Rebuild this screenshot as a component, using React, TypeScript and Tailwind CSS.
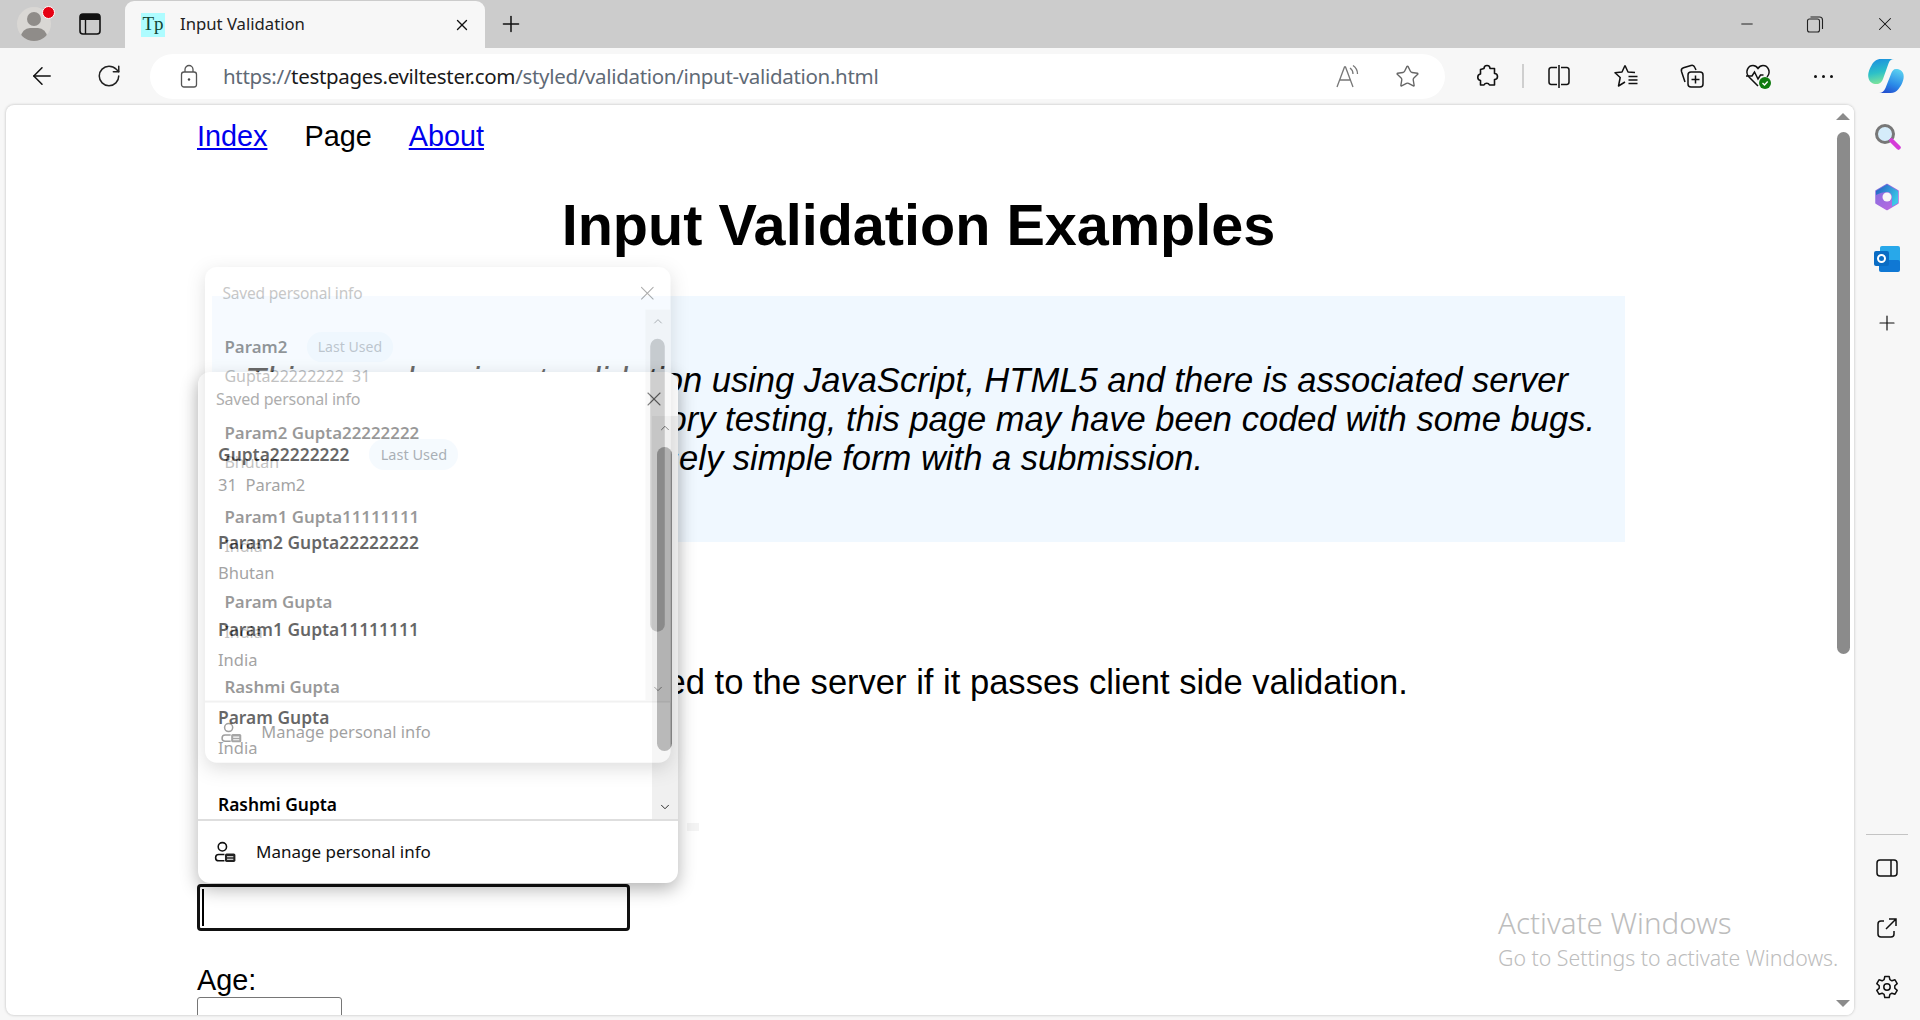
import React from "react";
import { Minus, X, Plus, ArrowLeft, RotateCw, Star, ChevronUp, ChevronDown } from "lucide-react";

const ui = "font-['Noto_Sans',sans-serif]";

type Row = { name: string; sub: string; badge?: boolean };

const frontRows: Row[] = [
  { name: "Gupta22222222", sub: "31  Param2", badge: true },
  { name: "Param2 Gupta22222222", sub: "Bhutan" },
  { name: "Param1 Gupta11111111", sub: "India" },
  { name: "Param Gupta", sub: "India" },
  { name: "Rashmi Gupta", sub: "" },
];

const backRows: Row[] = [
  { name: "Param2", sub: "Gupta22222222  31", badge: true },
  { name: "Param2 Gupta22222222", sub: "Bhutan" },
  { name: "Param1 Gupta11111111", sub: "India" },
  { name: "Param Gupta", sub: "India" },
  { name: "Rashmi Gupta", sub: "" },
];

const ManageIcon = () => (
  <svg width="25" height="25" viewBox="0 0 24 24" fill="none" stroke="#111" strokeWidth="1.5">
    <circle cx="9" cy="6.5" r="4" />
    <path d="M11 14H5.5a3 3 0 0 0 0 6H11" />
    <rect x="11.5" y="13" width="10" height="8" rx="1.5" fill="#222" stroke="none" />
    <path d="M13.5 16h6M13.5 18.5h6" stroke="#fff" strokeWidth="1" />
  </svg>
);

function AddressPopup({ rows, thumb, className }: { rows: Row[]; thumb: string; className: string }) {
  return (
    <div className={`absolute w-[480px] h-[511px] bg-white rounded-[12px] overflow-hidden flex flex-col shadow-[0_6px_18px_rgba(0,0,0,0.3)] origin-top-left ${ui} ${className}`}>
      <div className="h-[44px] flex items-center justify-between pl-[18px] pr-[12px] pt-[10px] shrink-0">
        <span className="text-[16px] text-[#777] tracking-[-0.2px]">Saved personal info</span>
        <X size={24} strokeWidth={1.1} className="text-[#333]" />
      </div>
      <div className="flex-1 flex min-h-0">
        <div className="flex-1 pl-[20px] pt-[23px] overflow-hidden">
          {rows.map((r) => (
            <div key={r.name} className="h-[87.5px]">
              <div className="h-[31px] flex items-center gap-[20px]">
                <span className="text-[17.4px] font-semibold text-black whitespace-nowrap">{r.name}</span>
                {r.badge && (
                  <span className="w-[89px] h-[31px] rounded-full bg-[#eff7fe] text-[#6f7a85] text-[14.5px] flex items-center justify-center">Last Used</span>
                )}
              </div>
              <div className="text-[16.5px] leading-[24px] mt-[3px] text-[#666] whitespace-pre">{r.sub}</div>
            </div>
          ))}
        </div>
        <div className="w-[26px] bg-[#f0f0f0] relative flex flex-col items-center justify-between py-[5px] shrink-0">
          <ChevronUp size={14} strokeWidth={1.5} className="text-[#222]" />
          <div className={`absolute left-[5px] w-[15px] rounded-full ${thumb}`} />
          <ChevronDown size={14} strokeWidth={1.5} className="text-[#111]" />
        </div>
      </div>
      <div className="h-[64px] border-t-2 border-[#dedede] flex items-center pl-[15px] gap-[18px] shrink-0">
        <ManageIcon />
        <span className="text-[17px] text-[#111]">Manage personal info</span>
      </div>
    </div>
  );
}

const ToolIcon = ({ children, x }: { children: React.ReactNode; x?: string }) => (
  <div className={`w-[28px] h-[28px] flex items-center justify-center shrink-0 ${x ?? ""}`}>{children}</div>
);

function TabStrip() {
  return (
    <div className="h-[48px] bg-[#cccccc] flex items-end shrink-0 relative">
      <div className="w-[17px]" />
      <div className="relative w-[34px] h-[34px] mb-[7px] rounded-full bg-[#d9d7d4] overflow-hidden shrink-0">
        <div className="absolute left-[10px] top-[5px] w-[14px] h-[14px] rounded-full bg-[#8f8c89]" />
        <div className="absolute left-[4px] top-[21px] w-[26px] h-[18px] rounded-full bg-[#8f8c89]" />
      </div>
      <div className="absolute left-[42px] top-[6px] w-[11px] h-[11px] rounded-full bg-[#e60012] border border-white box-content" />
      <div className="w-[28px]" />
      <svg width="22" height="22" viewBox="0 0 22 22" className="mb-[13px] shrink-0">
        <rect x="1" y="1" width="20" height="20" rx="3" fill="none" stroke="#111" strokeWidth="1.6" />
        <path d="M1 4a3 3 0 0 1 3-3h14a3 3 0 0 1 3 3v3H1z" fill="#111" />
        <path d="M6.5 7v14" stroke="#111" strokeWidth="1.4" />
      </svg>
      <div className="w-[24px]" />
      <div className="w-[360px] h-[47px] bg-[#f7f7f7] rounded-t-[9px] flex items-center pl-[16px] pr-[14px] shrink-0">
        <div className="w-[24px] h-[24px] bg-[#aefcff] text-[#143] text-[19px] leading-[22px] text-center font-['Liberation_Serif',serif] shrink-0">Tp</div>
        <span className={`ml-[15px] mb-[2px] flex-1 text-[16.7px] text-[#222] ${ui}`}>Input Validation</span>
        <X size={18} strokeWidth={1.8} className="text-[#111]" />
      </div>
      <Plus size={26} strokeWidth={1.4} className="ml-[13px] mb-[11px] text-[#111]" />
      <div className="flex-1" />
      <div className="flex items-center gap-[50px] mb-[13px] pr-[24px]">
        <Minus size={18} strokeWidth={1.2} className="text-[#111]" />
        <svg width="18" height="18" viewBox="0 0 18 18" fill="none" stroke="#222" strokeWidth="1.1">
          <rect x="1.5" y="4" width="12" height="13" rx="2" />
          <path d="M4.5 2h9a3 3 0 0 1 3 3v9" />
        </svg>
        <X size={22} strokeWidth={1.1} className="text-[#111]" />
      </div>
    </div>
  );
}

function Toolbar() {
  return (
    <div className="h-[57px] bg-[#f7f7f7] flex items-center pb-[1px] shrink-0">
      <ArrowLeft size={28} strokeWidth={1.3} className="ml-[28px] text-[#111]" />
      <RotateCw size={26} strokeWidth={1.4} className="ml-[40px] text-[#222]" />
      <div className="ml-[28px] w-[1295px] h-[45px] bg-white rounded-full flex items-center pl-[30px] shrink-0">
        <svg width="18" height="24" viewBox="0 0 18 24" fill="none" stroke="#555" strokeWidth="1.3">
          <rect x="1.5" y="8" width="15" height="15" rx="2.5" />
          <path d="M5 8V5.5a4 4 0 0 1 8 0V8" />
          <circle cx="9" cy="15.5" r="1.2" fill="#444" stroke="none" />
        </svg>
        <div className={`ml-[25px] flex-1 text-[20.5px] text-[#5f6a76] whitespace-nowrap tracking-[-0.32px] ${ui}`}>
          https://<span className="text-[#1a1a1a]">testpages.eviltester.com</span>/styled/validation/input-validation.html
        </div>
        <svg width="26" height="26" viewBox="0 0 26 26" fill="none" stroke="#777" strokeWidth="1.3" className="mr-[34px]">
          <path d="M2 24 9.5 4h1L18 24M5 17h11" />
          <path d="M15 5c2 1.4 3 3.4 3 6M18 2.5c3 2 4.5 5 4.5 8.5" />
        </svg>
        <Star size={25} strokeWidth={1.3} className="mr-[25px] text-[#666]" />
      </div>
      <ToolIcon x="ml-[28px]">
        <svg width="26" height="26" viewBox="0 0 26 26" fill="none" stroke="#111" strokeWidth="1.6" strokeLinejoin="round">
          <path d="M10 5.5a3 3 0 0 1 6 0h4.5v5a3 3 0 0 1 0 6V22h-5a3 3 0 0 0-5.5 0H6.5v-4.5a3.3 3.3 0 0 1 0-6.500V6.500z" />
        </svg>
      </ToolIcon>
      <div className="w-[2px] h-[24px] bg-[#cfcfcf] ml-[21px]" />
      <ToolIcon x="ml-[21px]">
        <svg width="24" height="24" viewBox="0 0 24 24" fill="none" stroke="#111" strokeWidth="1.5">
          <path d="M10 3.5H4A2.5 2.5 0 0 0 2 6v12a2.5 2.5 0 0 0 2 2.5h6M14 3.5h6A2.5 2.5 0 0 1 22 6v12a2.5 2.5 0 0 1-2 2.500h-6M12 1v23" />
        </svg>
      </ToolIcon>
      <ToolIcon x="ml-[39px]">
        <svg width="26" height="26" viewBox="0 0 26 26" fill="none" stroke="#111" strokeWidth="1.5" strokeLinejoin="round">
          <path d="M12 2.500 15 9l7 .5M12 2.500 9 9l-7 .8 5.200 4.700L5.500 23 12 19" />
          <path d="M15.500 13.500h9M15.500 17h9M15.500 20.500h9" />
        </svg>
      </ToolIcon>
      <ToolIcon x="ml-[38px]">
        <svg width="28" height="28" viewBox="0 0 28 28" fill="none" stroke="#111" strokeWidth="1.5">
          <rect x="10" y="10" width="15" height="15" rx="3" />
          <path d="M17.500 13.500v8M13.500 17.500h8" />
          <path d="M7 20 3.500 9.500a3 3 0 0 1 2-3.700L13 3.500a3 3 0 0 1 3.700 1.800L18 8" />
        </svg>
      </ToolIcon>
      <ToolIcon x="ml-[38px]">
        <svg width="28" height="28" viewBox="0 0 28 28" fill="none">
          <path d="M14 24 5 15C.5 10 4 3.500 9 3.500c2.500 0 4 1.500 5 3 1-1.500 2.500-3 5-3 5 0 8.500 6.500 4 11.500" stroke="#111" strokeWidth="1.5" />
          <path d="M2 14h6l2.500-4 3.500 7 2.500-4h3" stroke="#111" strokeWidth="1.5" />
          <circle cx="21" cy="21" r="6" fill="#107c10" />
          <path d="m18.500 21 2 2 3.200-3.500" stroke="#fff" strokeWidth="1.4" />
        </svg>
      </ToolIcon>
      <ToolIcon x="ml-[37px]">
        <div className="flex gap-[5px]">
          <i className="w-[3px] h-[3px] rounded-full bg-[#111]" />
          <i className="w-[3px] h-[3px] rounded-full bg-[#111]" />
          <i className="w-[3px] h-[3px] rounded-full bg-[#111]" />
        </div>
      </ToolIcon>
      <svg width="38" height="38" viewBox="0 0 38 38" className="ml-[30px] shrink-0">
        <defs>
          <linearGradient id="cpA" x1="0.2" y1="0" x2="0.4" y2="1">
            <stop offset="0" stopColor="#1b8fe0" />
            <stop offset="0.55" stopColor="#2cc0c8" />
            <stop offset="1" stopColor="#7fe59a" />
          </linearGradient>
          <linearGradient id="cpB" x1="0.7" y1="0" x2="0.3" y2="1">
            <stop offset="0" stopColor="#5ad0f0" />
            <stop offset="0.6" stopColor="#2a8ae8" />
            <stop offset="1" stopColor="#2350d0" />
          </linearGradient>
        </defs>
        <path d="M29 12c3.500 0 6.500 1.500 7.500 5.500 1 5-2 11-5 14.500-2 2.500-4.500 4-8 4H12c3 0 5-1.500 6.500-5L24 17c1-3 2.500-5 5-5z" fill="url(#cpB)" />
        <path d="M14 2h13c-3 0-4.500 1.500-5.500 4.500L16 22c-1.500 3.500-3 5-6.500 5-4 0-7-2-8-6-1-4.500 1-9 3-12.500C6.500 4.500 9.500 2 14 2z" fill="url(#cpA)" />
      </svg>
    </div>
  );
}

function SideBar() {
  return (
    <div className="w-[66px] shrink-0 flex flex-col items-center pt-[17px]">
      <svg width="28" height="28" viewBox="0 0 28 28" fill="none">
        <circle cx="12" cy="12" r="8.500" fill="#d5ecfa" stroke="#777" strokeWidth="3" />
        <path d="m18.500 18.500 7 7" stroke="#d53bd8" strokeWidth="4.500" strokeLinecap="round" />
      </svg>
      <svg width="28" height="28" viewBox="0 0 28 28" className="mt-[33px]">
        <defs>
          <linearGradient id="m3" x1="0" y1="0" x2="0.6" y2="1">
            <stop offset="0" stopColor="#7a6fe0" />
            <stop offset="1" stopColor="#b56ae0" />
          </linearGradient>
          <linearGradient id="m3b" x1="0" y1="0" x2="1" y2="0.6">
            <stop offset="0" stopColor="#2458c0" />
            <stop offset="1" stopColor="#3dc8e8" />
          </linearGradient>
        </defs>
        <path d="M14 1.500 25 8v12l-11 6.500L3 20V8z" fill="url(#m3)" stroke="url(#m3)" strokeWidth="1.5" strokeLinejoin="round" />
        <path d="M14 1.500 25 8v12l-6 3.500V14c0-3-2-5-5-5-4 0-7 1-11 3V8z" fill="url(#m3b)" />
        <circle cx="14" cy="14" r="4.500" fill="#f7f7f7" />
      </svg>
      <div className="relative w-[26px] h-[26px] mt-[35px]">
        <div className="absolute right-0 top-0 w-[20px] h-[24px] bg-[#28a8ea] rounded-[2px]" />
        <div className="absolute right-0 bottom-0 w-[21px] h-[12px] bg-[#0f78d4] rounded-[2px]" />
        <div className="absolute left-0 top-[5px] w-[15px] h-[15px] bg-[#0a6cc4] rounded-[2px] flex items-center justify-center">
          <div className="w-[9px] h-[9px] rounded-full border-2 border-white" />
        </div>
      </div>
      <Plus size={24} strokeWidth={1.2} className="mt-[39px] text-[#111]" />
      <div className="flex-1" />
      <div className="w-[42px] h-px bg-[#c4c4c4]" />
      <svg width="22" height="20" viewBox="0 0 22 20" fill="none" stroke="#111" strokeWidth="1.5" className="mt-[23px]">
        <rect x="1" y="2" width="20" height="16" rx="3" />
        <path d="M15 2v16" />
      </svg>
      <svg width="22" height="22" viewBox="0 0 22 22" fill="none" stroke="#111" strokeWidth="1.5" className="mt-[39px]">
        <path d="M8 4H5a3 3 0 0 0-3 3v10a3 3 0 0 0 3 3h10a3 3 0 0 0 3-3v-3" />
        <path d="M10 12 20 2M13 2h7v7" />
      </svg>
      <svg width="26" height="26" viewBox="0 0 26 26" fill="none" stroke="#111" strokeWidth="1.5" strokeLinejoin="round" className="mt-[35px] mb-[20px]">
        <circle cx="13" cy="13" r="3.2" />
        <path d="M10.800 2.500h4.400l.7 3.200 2 1.100 3.100-1 2.200 3.800-2.400 2.200v2.400l2.400 2.200-2.200 3.800-3.100-1-2 1.100-.7 3.200h-4.400l-.7-3.200-2-1.100-3.100 1-2.200-3.800 2.400-2.200v-2.400L2.800 9.600 5 5.800l3.100 1 2-1.100z" />
      </svg>
    </div>
  );
}

function PageContent() {
  return (
    <div className="ml-[191px] w-[1443px] text-black font-['Liberation_Sans',sans-serif]">
      <nav className="h-[62px] pt-[14px] flex gap-[37px] text-[28.8px] leading-[34px]">
        <a className="text-[#0000ee] underline">Index</a>
        <span>Page</span>
        <a className="text-[#0000ee] underline">About</a>
      </nav>
      <h1 className="mt-[25px] text-center font-bold text-[57.6px] leading-[66px]">Input Validation Examples</h1>
      <div className="mt-[38px] ml-[15px] w-[1413px] h-[246px] bg-[#f0f8ff] pl-[33px] pr-[30px] pt-[65px] italic text-[34.56px] leading-[39.2px]">
        This page has input validation using JavaScript, HTML5 and there is associated server side validation. For exploratory testing, this page may have been coded with some bugs. This page contains a purposely simple form with a submission.
      </div>
      <p className="mt-[120px] ml-[3px] text-[34.56px] leading-[40px]">
        The form below is only submitted to the server if it passes client side validation.
      </p>
      <label className="block mt-[128px] text-[28.8px] leading-[34px]">Surname:</label>
      <div className="relative mt-[20px] w-[433px] h-[47px]">
        <input className="block w-full h-full border-[3px] border-[#111] rounded-[4px] bg-white outline-none" />
        <div className="absolute left-[5px] top-[5px] w-[2px] h-[37px] bg-black" />
      </div>
      <label className="block mt-[32px] text-[28.8px] leading-[34px]">Age:</label>
      <div className="w-[145px] h-[40px] border border-[#767676] rounded-[3px]" />
    </div>
  );
}

function PageScrollbar() {
  return (
    <div className="absolute right-0 top-0 bottom-0 w-[22px] flex flex-col items-center justify-between pt-[8px] pb-[8px] bg-white">
      <div className="w-0 h-0 border-x-[7px] border-x-transparent border-b-[7px] border-b-[#8b8b8b]" />
      <div className="absolute top-[27px] w-[13px] h-[522px] rounded-full bg-[#8b8b8b]" />
      <div className="w-0 h-0 border-x-[7px] border-x-transparent border-t-[7px] border-t-[#8b8b8b]" />
    </div>
  );
}

export default function App() {
  return (
    <div className="w-[1920px] h-[1020px] overflow-hidden bg-[#f7f7f7] flex flex-col">
      <TabStrip />
      <Toolbar />
      <div className="flex-1 min-h-0 flex">
        <div className="w-[6px] shrink-0" />
        <div className="flex-1 mb-[5px] bg-white rounded-[8px] overflow-hidden relative shadow-[0_0_3px_rgba(0,0,0,0.25)]">
          <PageContent />
          <PageScrollbar />
          <div className="absolute left-[681px] top-[718px] w-[12px] h-[8px] bg-[#f4f4f4]" />
          <AddressPopup rows={frontRows} thumb="top-[31px] h-[304px] bg-[#8a8a8a]" className="left-[192px] top-[267px]" />
          <AddressPopup rows={backRows} thumb="top-[30px] h-[302px] bg-[#8a8a8a]" className="left-[199px] top-[162px] scale-[0.97] opacity-40" />
          <div className={`absolute left-[1492px] top-[800px] text-[#bdbdbd] pointer-events-none ${ui}`}>
            <div className="text-[29.5px] leading-[36px] font-light">Activate Windows</div>
            <div className="text-[21.3px] leading-[28px] font-light mt-[3px]">Go to Settings to activate Windows.</div>
          </div>
        </div>
        <SideBar />
      </div>
    </div>
  );
}
